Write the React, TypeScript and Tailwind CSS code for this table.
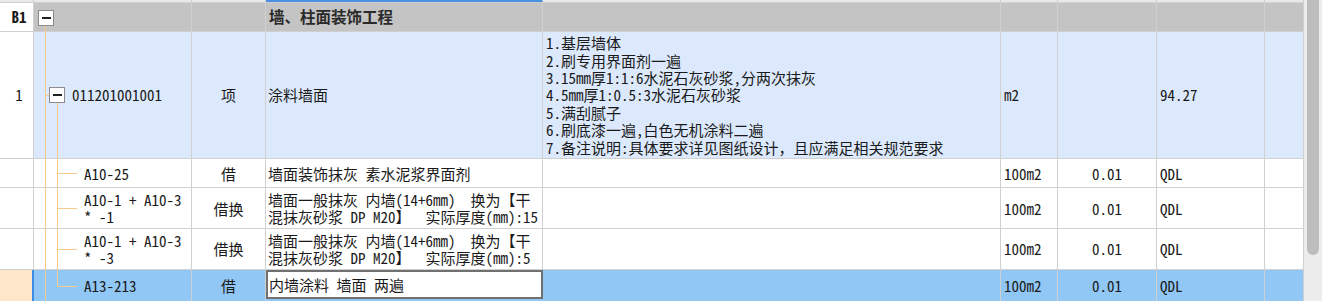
const FONT = "font-['Noto_Sans_Mono_CJK_SC','Noto_Sans_CJK_SC',monospace]";

const W = ['w-[34px]', 'w-[158px]', 'w-[74px]', 'w-[277px]', 'w-[458px]', 'w-[57px]', 'w-[99px]', 'w-[108px]', 'w-[39px]'];

function MinusBox() {
  return (
    <div className="w-4 h-4 border border-[#8c8c8c] bg-white flex items-center justify-center">
      <div className="w-[9px] h-[2px] bg-[#222]" />
    </div>
  );
}

function Tree({ kind, children }: { kind: 'item' | 'child' | 'last'; children?: React.ReactNode }) {
  return (
    <div className="relative h-full">
      <div className="absolute left-[11px] top-0 bottom-0 w-px bg-[#f7c98b]" />
      {kind === 'item' && (
        <>
          <div className="absolute left-[11px] top-1/2 w-[4px] h-px bg-[#f7c98b]" />
          <div className="absolute left-[23px] top-[calc(50%+8px)] bottom-0 w-px bg-[#f7c98b]" />
          <div className="absolute left-[15px] top-[calc(50%-8px)]">
            <MinusBox />
          </div>
        </>
      )}
      {kind === 'child' && (
        <>
          <div className="absolute left-[23px] top-0 bottom-0 w-px bg-[#f7c98b]" />
          <div className="absolute left-[23px] top-1/2 w-5 h-px bg-[#f7c98b]" />
        </>
      )}
      {kind === 'last' && (
        <>
          <div className="absolute left-[23px] top-0 h-1/2 w-px bg-[#f7c98b]" />
          <div className="absolute left-[23px] top-1/2 w-5 h-px bg-[#f7c98b]" />
        </>
      )}
      <div className={`h-full flex items-center ${kind === 'item' ? 'pl-[38px]' : 'pl-[50px]'}`}>{children}</div>
    </div>
  );
}

const children = [
  { code: ['A10-25'], type: '借', name: ['墙面装饰抹灰 素水泥浆界面剂'], h: 'h-[29px]' },
  { code: ['A10-1 + A10-3', '* -1'], type: '借换', name: ['墙面一般抹灰 内墙(14+6mm)  换为【干', '混抹灰砂浆 DP M20】  实际厚度(mm):15'], h: 'h-[41px]' },
  { code: ['A10-1 + A10-3', '* -3'], type: '借换', name: ['墙面一般抹灰 内墙(14+6mm)  换为【干', '混抹灰砂浆 DP M20】  实际厚度(mm):5'], h: 'h-[41px]' },
];

const features = [
  '1.基层墙体',
  '2.刷专用界面剂一遍',
  '3.15mm厚1:1:6水泥石灰砂浆,分两次抹灰',
  '4.5mm厚1:0.5:3水泥石灰砂浆',
  '5.满刮腻子',
  '6.刷底漆一遍,白色无机涂料二遍',
  '7.备注说明:具体要求详见图纸设计，且应满足相关规范要求',
];

export default function App() {
  const cell = 'shrink-0 h-full border-r border-[#d0d0d0]';
  return (
    <div className={`flex w-[1322px] h-[301px] overflow-hidden bg-white text-[15px] leading-[17.4px] text-[#1a1a1a] ${FONT}`}>
      <div className="w-[1304px] flex flex-col">
        {/* partial header strip */}
        <div className="flex h-[3px] bg-[#e9e9e9] border-b border-[#d0d0d0]">
          {W.map((w, i) => (
            <div key={i} className={`${w} ${cell} ${i === 3 ? 'border-b-2 border-b-[#4a90e2]' : ''}`} />
          ))}
        </div>

        {/* section row */}
        <div className="flex h-[29px] border-b border-[#d0d0d0] bg-[#c4c4c4]">
          <div className={`${W[0]} ${cell} bg-white flex items-center justify-center pl-[5px] font-bold`}>B1</div>
          <div className={`${W[1]} ${cell} border-[#bababa] relative`}>
            <div className="absolute left-[4px] top-[7px]">
              <MinusBox />
            </div>
            <div className="absolute left-[11px] top-[23px] bottom-[-1px] w-px bg-[#f7c98b]" />
          </div>
          <div className={`${W[2]} ${cell} border-[#bababa]`} />
          <div className={`${W[3]} ${cell} border-[#bababa] flex items-center pl-[3px] font-bold text-[#2a2a2a] text-[15.5px]`}>
            墙、柱面装饰工程
          </div>
          {W.slice(4).map((w, i) => (
            <div key={i} className={`${w} ${cell} border-[#bababa]`} />
          ))}
        </div>

        {/* bill item */}
        <div className="flex h-[128px] border-b border-[#d0d0d0] bg-[#dce9fc]">
          <div className={`${W[0]} ${cell} bg-white flex items-center justify-center pl-[5px]`}>1</div>
          <div className={`${W[1]} ${cell}`}>
            <Tree kind="item">011201001001</Tree>
          </div>
          <div className={`${W[2]} ${cell} flex items-center justify-center`}>项</div>
          <div className={`${W[3]} ${cell} flex items-center pl-[2px]`}>涂料墙面</div>
          <div className={`${W[4]} ${cell} flex flex-col justify-center pl-[3px] whitespace-nowrap`}>
            {features.map((f) => (
              <div key={f}>{f}</div>
            ))}
          </div>
          <div className={`${W[5]} ${cell} flex items-center pl-[3px]`}>m2</div>
          <div className={`${W[6]} ${cell}`} />
          <div className={`${W[7]} ${cell} flex items-center pl-[3px]`}>94.27</div>
          <div className={`${W[8]} ${cell}`} />
        </div>

        {/* quota rows */}
        {children.map((r, idx) => (
          <div key={idx} className={`flex ${r.h} border-b border-[#d0d0d0] bg-white`}>
            <div className={`${W[0]} ${cell}`} />
            <div className={`${W[1]} ${cell}`}>
              <Tree kind="child">
                <div className="whitespace-pre">
                  {r.code.map((c) => (
                    <div key={c}>{c}</div>
                  ))}
                </div>
              </Tree>
            </div>
            <div className={`${W[2]} ${cell} flex items-center justify-center`}>{r.type}</div>
            <div className={`${W[3]} ${cell} flex flex-col justify-center pl-[2px] whitespace-pre`}>
              {r.name.map((n) => (
                <div key={n}>{n}</div>
              ))}
            </div>
            <div className={`${W[4]} ${cell}`} />
            <div className={`${W[5]} ${cell} flex items-center pl-[3px]`}>100m2</div>
            <div className={`${W[6]} ${cell} flex items-center justify-center`}>0.01</div>
            <div className={`${W[7]} ${cell} flex items-center pl-[3px]`}>QDL</div>
            <div className={`${W[8]} ${cell}`} />
          </div>
        ))}

        {/* selected row */}
        <div className="flex h-[31px] bg-[#91c7f4]">
          <div className={`${W[0]} shrink-0 h-full bg-[#fde6c9] border-r-2 border-[#3b8de8]`} />
          <div className={`${W[1]} ${cell}`}>
            <Tree kind="last">A13-213</Tree>
          </div>
          <div className={`${W[2]} ${cell} flex items-center justify-center`}>借</div>
          <div className={`${W[3]} shrink-0 h-[29px] border-2 border-[#707070] bg-white flex items-center pl-[1px]`}>
            内墙涂料 墙面 两遍
          </div>
          <div className={`${W[4]} ${cell}`} />
          <div className={`${W[5]} ${cell} flex items-center pl-[3px]`}>100m2</div>
          <div className={`${W[6]} ${cell} flex items-center justify-center`}>0.01</div>
          <div className={`${W[7]} ${cell} flex items-center pl-[3px]`}>QDL</div>
          <div className={`${W[8]} ${cell}`} />
        </div>
      </div>

      {/* scrollbar */}
      <div className="w-[18px] h-full bg-[#ececec] pl-[3px]">
        <div className="w-3 h-[255px] rounded-b-full bg-[#bdbdbd]" />
      </div>
    </div>
  );
}
